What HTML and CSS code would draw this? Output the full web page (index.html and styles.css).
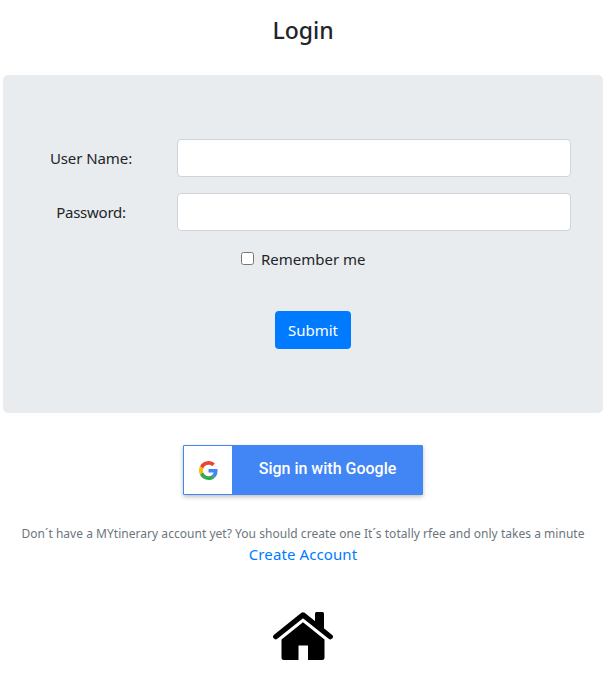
FILE: index.html
```html
<!DOCTYPE html>
<html lang="en">
<head>
<meta charset="utf-8">
<title>Login</title>
<link rel="stylesheet" href="styles.css">
</head>
<body>
<main class="page">
  <h1 class="title"><span>Login</span></h1>
  <form class="panel">
    <div class="row">
      <label class="label" for="user"><span class="user">User Name:</span></label>
      <input class="field" id="user" type="text">
    </div>
    <div class="row">
      <label class="label" for="pass"><span class="pass">Password:</span></label>
      <input class="field" id="pass" type="password">
    </div>
    <label class="remember"><input class="check" type="checkbox"><span>Remember me</span></label>
    <button class="submit" type="button"><span>Submit</span></button>
  </form>
  <button class="google" type="button">
    <span class="google-icon">
      <svg width="19" height="19" viewBox="0 0 48 48">
        <path fill="#ea4335" d="M24 9.5c3.54 0 6.71 1.22 9.21 3.6l6.85-6.85C35.9 2.38 30.47 0 24 0 14.62 0 6.51 5.38 2.56 13.22l7.98 6.19C12.43 13.72 17.74 9.5 24 9.5z"/>
        <path fill="#4285f4" d="M46.98 24.55c0-1.57-.15-3.09-.38-4.55H24v9.02h12.94c-.58 2.96-2.26 5.48-4.78 7.18l7.73 6c4.51-4.18 7.09-10.36 7.09-17.65z"/>
        <path fill="#fbbc05" d="M10.53 28.59c-.48-1.45-.76-2.99-.76-4.59s.27-3.14.76-4.59l-7.98-6.19C.92 16.46 0 20.12 0 24c0 3.88.92 7.54 2.56 10.78l7.97-6.19z"/>
        <path fill="#34a853" d="M24 48c6.48 0 11.93-2.13 15.89-5.81l-7.73-6c-2.15 1.45-4.92 2.3-8.16 2.3-6.26 0-11.57-4.22-13.47-9.91l-7.98 6.19C6.51 42.62 14.62 48 24 48z"/>
      </svg>
    </span>
    <span class="google-text"><span>Sign in with Google</span></span>
  </button>
  <p class="note"><span>Don´t have a MYtinerary account yet? You should create one It´s totally rfee and only takes a minute</span></p>
  <a class="create"><span>Create Account</span></a>
  <svg class="home" width="60" height="50" viewBox="0 0 60 50">
    <path d="M2.700 24.700 30 2.900l27.300 21.800" fill="none" stroke="#000" stroke-width="5.200" stroke-linejoin="round" stroke-linecap="round"/>
    <path d="M42 1.500q0-1.500 1.500-1.500h6q1.500 0 1.500 1.500V20l-9-7.500z"/>
    <path d="M8.500 27.500 30 10.300 51.500 27.500v18q0 2.500-2.500 2.500H35V33.500h-9.500v14.500H11q-2.500 0-2.500-2.500z"/>
  </svg>
</main>
</body>
</html>
```
FILE: styles.css
```css
* { box-sizing: border-box; }
body {
  margin: 0;
  background: #fff;
  color: #212529;
  font: 400 15px/24px "Noto Sans", sans-serif;
}
.page {
  width: 600px;
  margin-left: 3px;
  display: flex;
  flex-direction: column;
  align-items: center;
}
.title {
  margin: 16px 0 30px;
  font-size: 23px;
  font-weight: 500;
  line-height: 29px;
}
.panel {
  width: 600px;
  height: 338px;
  padding: 64px 32px 0 15px;
  border-radius: 5px;
  background: #e9ecef;
  display: flex;
  flex-direction: column;
}
.row {
  display: flex;
  align-items: center;
  margin-bottom: 16px;
}
.label {
  width: 145px;
  margin-right: 14px;
  padding-left: 1px;
  text-align: center;
}
.user { letter-spacing: -.08px; }
.pass { letter-spacing: -.25px; }
.field {
  width: 394px;
  height: 38px;
  border: 1px solid #ced4da;
  border-radius: 4px;
  background: #fff;
}
.remember {
  display: flex;
  align-items: center;
  height: 24px;
  margin-left: 223px;
}
.check {
  width: 13px;
  height: 13px;
  margin: 0 7px 2px 0;
}
.submit {
  width: 76px;
  height: 38px;
  margin: 40px 0 0 257px;
  padding: 0;
  border: 0;
  border-radius: 4px;
  background: #007bff;
  color: #fff;
  font: inherit;
}
.google {
  display: flex;
  width: 240px;
  height: 50px;
  margin: 32px 0 27px;
  padding: 0;
  border: 1px solid #4285f4;
  border-radius: 1px;
  background: #4285f4;
  box-shadow: 0 2px 4px rgba(0, 0, 0, .25);
  color: #fff;
  font: 500 16px/46px Roboto, sans-serif;
}
.google-icon {
  width: 48px;
  height: 48px;
  background: #fff;
  display: flex;
  align-items: center;
  justify-content: center;
}
.google-text {
  flex: 1;
  padding-left: 1px;
}
.note {
  margin: 0;
  color: #6c757d;
  font-size: 12px;
  line-height: 24px;
  letter-spacing: .03px;
  white-space: nowrap;
}
.create {
  margin-top: -2px;
  color: #007bff;
  line-height: 20px;
  letter-spacing: .1px;
}
.home { margin-top: 48px; }
```
